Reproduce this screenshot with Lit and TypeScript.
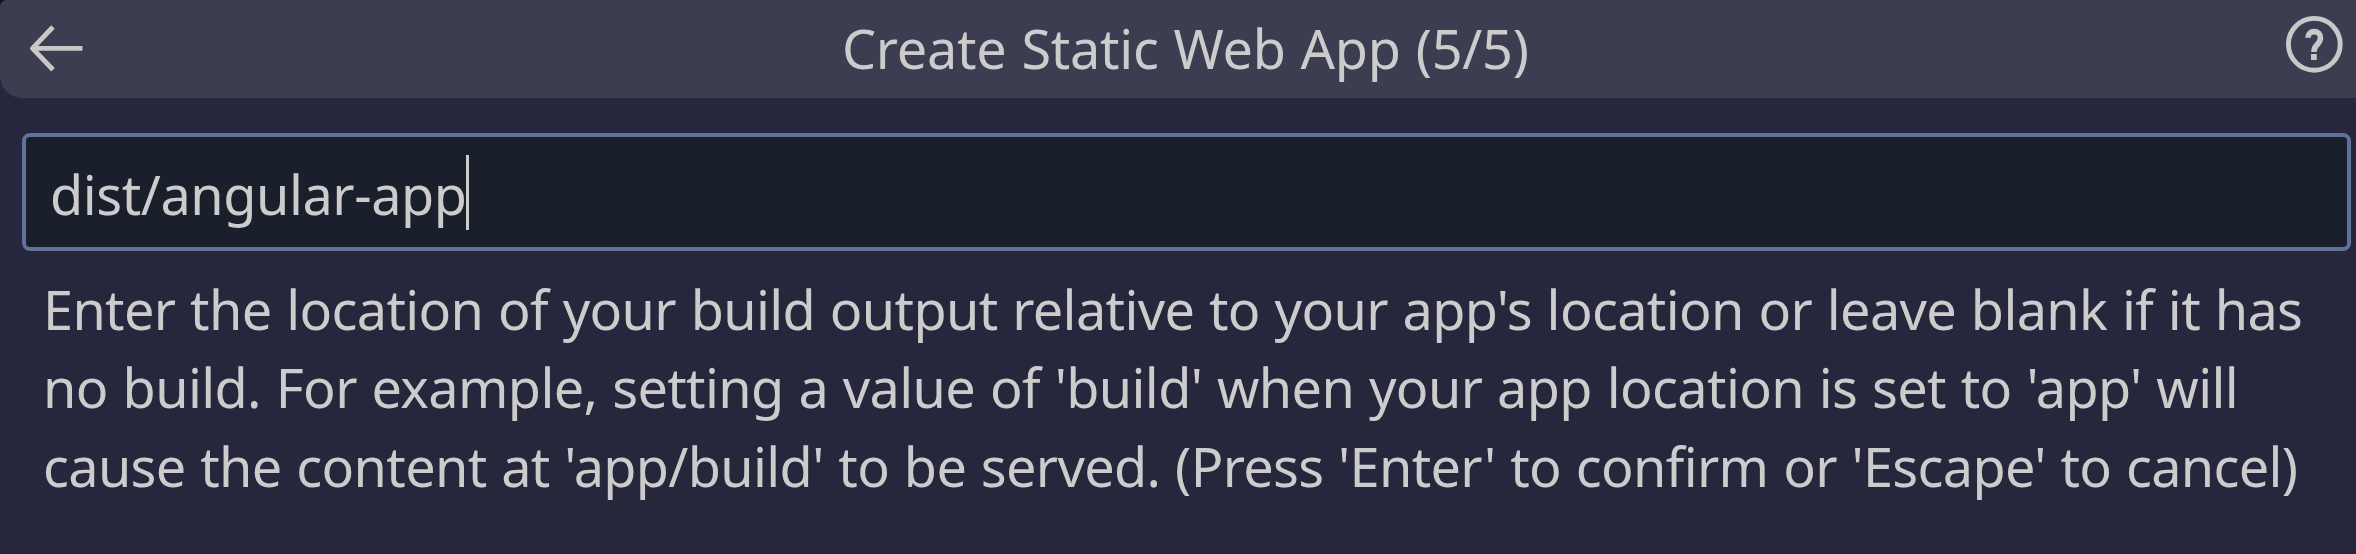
import { LitElement, html, css } from "lit";
import { customElement, property } from "lit/decorators.js";

@customElement("wizard-header")
export class WizardHeader extends LitElement {
  static styles = css`
    :host { display: block; background: #101620; }
    .under { background: #26263d; border-top-left-radius: 7px; }
    .bar {
      display: flex; align-items: flex-start; justify-content: space-between;
      box-sizing: border-box; height: 98px; padding: 0 11px 0 26px;
      background: #3d3d52; border-radius: 7px 0 0 22px;
    }
    .icon { display: block; width: 62px; height: 62px; flex: none; fill: none; stroke: #c8c8c8; }
    .back { margin-top: 17px; }
    .help { margin-top: 13px; }
    .title { flex: 1; padding-left: 754px; line-height: 96px; letter-spacing: -0.28px; word-spacing: 1.3px; white-space: nowrap; }
  `;
  @property() heading = "";
  render() {
    return html`<div class="under"><div class="bar">
      <svg class="icon back" viewBox="0 0 62 62" stroke-width="4.9">
        <path d="M56.5 31.4H8M27 10 6.5 31.4 27 52.8" stroke-linejoin="round" />
      </svg>
      <div class="title">${this.heading}</div>
      <svg class="icon help" viewBox="0 0 62 62">
        <circle cx="31.3" cy="31.3" r="25.9" stroke-width="4.9" />
        <path stroke-width="5.6" d="M25 24.8C25 20.8 27.6 18.6 31.2 18.6S37.5 20.9 37.5 24.8C37.5 28.6 35.8 30 33.6 32.3C31.6 34.4 30.9 35.6 30.9 39" />
        <path stroke-width="5.8" d="M30.9 41V47" />
      </svg>
    </div></div>`;
  }
}

@customElement("text-field")
export class TextField extends LitElement {
  static styles = css`
    :host { display: block; }
    .field {
      display: flex; align-items: center; box-sizing: border-box; height: 118px;
      padding: 0 24px; border: 4px solid #617199; border-radius: 8px; background: #1a1f2c;
    }
    .value { padding-top: 4px; line-height: 74px; letter-spacing: -0.43px; white-space: nowrap; }
    .caret { width: 3px; height: 75px; margin-left: -1px; background: #ccc; }
  `;
  @property() value = "";
  render() {
    return html`<div class="field"><span class="value">${this.value}</span><span class="caret"></span></div>`;
  }
}

@customElement("app-root")
export class AppRoot extends LitElement {
  static styles = css`
    :host {
      display: block; height: 554px; overflow: hidden; background: #26263d; color: #ccc;
      font: 54px "Noto Sans", "Open Sans", sans-serif;
    }
    .body { padding: 35px 5px 0 22px; }
    .message { margin: 19px 0 0; padding-left: 21px; line-height: 78.4px; word-spacing: 1.3px; white-space: nowrap; }
    .line { display: block; }
    .first { letter-spacing: -0.645px; }
    .second { letter-spacing: -0.616px; }
    .third { letter-spacing: -0.66px; }
  `;
  render() {
    return html`
      <wizard-header heading="Create Static Web App (5/5)"></wizard-header>
      <div class="body">
        <text-field value="dist/angular-app"></text-field>
        <p class="message">
          <span class="line first">Enter the location of your build output relative to your app's location or leave blank if it has</span>
          <span class="line second">no build. For example, setting a value of 'build' when your app location is set to 'app' will</span>
          <span class="line third">cause the content at 'app/build' to be served. (Press 'Enter' to confirm or 'Escape' to cancel)</span>
        </p>
      </div>`;
  }
}
